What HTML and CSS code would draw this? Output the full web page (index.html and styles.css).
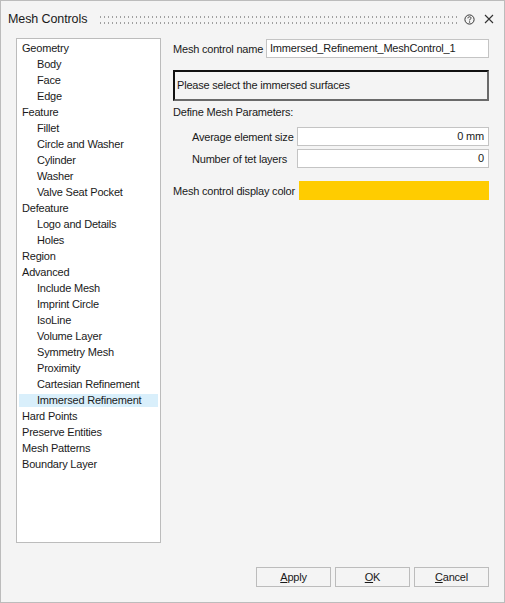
FILE: index.html
```html
<!DOCTYPE html>
<html>
<head>
<meta charset="utf-8">
<title>Mesh Controls</title>
<link rel="stylesheet" href="styles.css">
</head>
<body>
<div class="window">
  <div class="titlebar">
    <span class="title">Mesh Controls</span>
    <span class="grip"><span class="dots"></span><span class="dots"></span></span>
    <span class="tb-icons">
      <svg class="help" width="11" height="11" viewBox="0 0 11 11"><circle cx="5.5" cy="5.5" r="4.6" fill="none" stroke="#333" stroke-width="1"/><path d="M3.9 4.3 C3.9 3.3 4.6 2.8 5.5 2.8 C6.4 2.8 7.1 3.3 7.1 4.1 C7.1 5 5.6 5.1 5.6 6.4" fill="none" stroke="#333" stroke-width="1"/><circle cx="5.6" cy="8" r="0.65" fill="#333"/></svg>
      <svg class="close" width="10" height="10" viewBox="0 0 10 10"><path d="M1 1 L9 9 M9 1 L1 9" stroke="#333" stroke-width="1.1"/></svg>
    </span>
  </div>
  <div class="main">
    <div class="tree">
      <div class="item">Geometry</div>
      <div class="item child">Body</div>
      <div class="item child">Face</div>
      <div class="item child">Edge</div>
      <div class="item">Feature</div>
      <div class="item child">Fillet</div>
      <div class="item child">Circle and Washer</div>
      <div class="item child">Cylinder</div>
      <div class="item child">Washer</div>
      <div class="item child">Valve Seat Pocket</div>
      <div class="item">Defeature</div>
      <div class="item child">Logo and Details</div>
      <div class="item child">Holes</div>
      <div class="item">Region</div>
      <div class="item">Advanced</div>
      <div class="item child">Include Mesh</div>
      <div class="item child">Imprint Circle</div>
      <div class="item child">IsoLine</div>
      <div class="item child">Volume Layer</div>
      <div class="item child">Symmetry Mesh</div>
      <div class="item child">Proximity</div>
      <div class="item child">Cartesian Refinement</div>
      <div class="item child selected"><span class="sel">Immersed Refinement</span></div>
      <div class="item">Hard Points</div>
      <div class="item">Preserve Entities</div>
      <div class="item">Mesh Patterns</div>
      <div class="item">Boundary Layer</div>
    </div>
    <div class="panel">
      <div class="row name-row">
        <span class="lbl name-lbl">Mesh control name</span>
        <div class="field">Immersed_Refinement_MeshControl_1</div>
      </div>
      <div class="selectbox">Please select the immersed surfaces</div>
      <div class="section">Define Mesh Parameters:</div>
      <div class="row param">
        <span class="lbl param-lbl">Average element size</span>
        <div class="field num">0 mm</div>
      </div>
      <div class="row param second">
        <span class="lbl param-lbl">Number of tet layers</span>
        <div class="field num">0</div>
      </div>
      <div class="row color-row">
        <span class="lbl color-lbl">Mesh control display color</span>
        <div class="swatch"></div>
      </div>
    </div>
  </div>
  <div class="buttons">
    <button class="btn"><u>A</u>pply</button>
    <button class="btn"><u>O</u>K</button>
    <button class="btn"><u>C</u>ancel</button>
  </div>
</div>
</body>
</html>
```

FILE: styles.css
```css
html, body {
  margin: 0;
  padding: 0;
  background: #f4f4f4;
}
body {
  font-family: "Liberation Sans", Arial, sans-serif;
  font-size: 11px;
  letter-spacing: -0.2px;
  color: #1a1a1a;
}
.window {
  width: 505px;
  height: 603px;
  box-sizing: border-box;
  border: 1px solid #bcbcbc;
  background: #f4f4f4;
  display: flex;
  flex-direction: column;
}
.titlebar {
  height: 36px;
  display: flex;
  align-items: center;
  padding-left: 7px;
  padding-right: 10px;
}
.title {
  font-size: 12.5px;
  letter-spacing: -0.1px;
  color: #1a1a1a;
  width: 92px;
}
.grip {
  display: flex;
  flex-direction: column;
  gap: 4px;
  width: 358px;
  margin-top: 1px;
}
.dots {
  display: block;
  height: 2px;
  background-image: linear-gradient(to right, #a0a0a0 1.5px, transparent 1.5px);
  background-size: 4px 2px;
  background-repeat: repeat-x;
}
.tb-icons {
  display: flex;
  align-items: center;
  margin-left: auto;
  gap: 9px;
}
.tb-icons svg {
  display: block;
}
.main {
  display: flex;
  padding: 1px 15px 0 15px;
  gap: 12px;
}
.tree {
  width: 145px;
  height: 505px;
  box-sizing: border-box;
  border: 1px solid #bcbcbc;
  background: #fff;
  padding: 1px 2px 0 2px;
}
.item {
  height: 16px;
  line-height: 16px;
  padding-left: 3px;
  white-space: nowrap;
}
.item.child {
  padding-left: 18px;
}
.item.selected {
  padding-left: 0;
  display: flex;
  align-items: center;
}
.sel {
  display: block;
  width: 100%;
  height: 13px;
  line-height: 13px;
  padding-left: 18px;
  background: #d9effb;
}
.panel {
  width: 316px;
  display: flex;
  flex-direction: column;
}
.row {
  display: flex;
  align-items: center;
}
.lbl {
  white-space: nowrap;
}
.field {
  flex: 1;
  height: 19px;
  line-height: 17px;
  box-sizing: border-box;
  border: 1px solid #c4c4c4;
  background: #fff;
  padding: 0 3px;
  white-space: nowrap;
}
.name-row {
  margin-top: 1px;
}
.name-lbl {
  width: 93px;
}
.selectbox {
  margin-top: 12px;
  height: 31px;
  box-sizing: border-box;
  border-top: 2px solid #111;
  border-left: 2px solid #111;
  border-right: 2px solid #6a6a6a;
  border-bottom: 2px solid #6a6a6a;
  line-height: 27px;
  padding-left: 2px;
  background: #f4f4f4;
}
.section {
  margin-top: 5px;
  height: 13px;
  line-height: 13px;
}
.param {
  margin-top: 8px;
  padding-left: 19px;
}
.param.second {
  margin-top: 3px;
}
.param-lbl {
  width: 105px;
}
.num {
  text-align: right;
  padding-right: 4px;
}
.color-row {
  margin-top: 13px;
}
.color-lbl {
  width: 126px;
}
.swatch {
  flex: 1;
  height: 19px;
  background: #ffcc00;
}
.buttons {
  margin-top: auto;
  margin-bottom: 15px;
  display: flex;
  justify-content: flex-end;
  gap: 4px;
  padding-right: 15px;
}
.btn {
  width: 75px;
  height: 20px;
  box-sizing: border-box;
  border: 1px solid #bcbcbc;
  background: #f4f4f4;
  font-family: "Liberation Sans", Arial, sans-serif;
  font-size: 11px;
  letter-spacing: -0.2px;
  color: #1a1a1a;
  padding: 0;
  line-height: 18px;
}
.btn u {
  text-decoration-thickness: 1px;
  text-underline-offset: 1px;
}
```
